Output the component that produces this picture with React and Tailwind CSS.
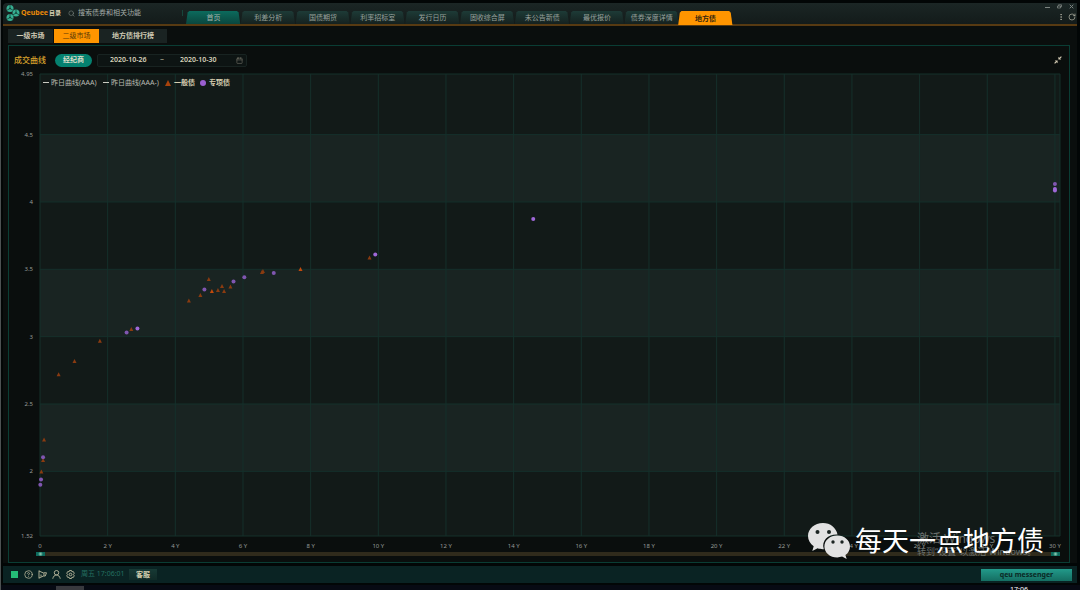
import React, { useState } from "react";
import { Calendar, CircleHelp, EllipsisVertical, RotateCw, Search } from "lucide-react";

const MAX_YEAR = 30.15;
const MIN_YIELD = 1.52;
const MAX_YIELD = 4.95;

const mainTabs = [
  "首页", "利差分析", "国债期货", "利率招标室", "发行日历",
  "固收综合屏", "未公告新债", "最优报价", "债券深度详情", "地方债",
];

const generalBonds = [
  [0.04, 1.999], [0.09, 2.084], [0.12, 2.237], [0.55, 2.72], [1.02, 2.82],
  [1.77, 2.97], [2.7, 3.057], [4.4, 3.268], [4.74, 3.309], [4.99, 3.428],
  [5.08, 3.339, true], [5.26, 3.346], [5.38, 3.376], [5.44, 3.339], [5.63, 3.372],
  [6.56, 3.48], [6.59, 3.487], [7.7, 3.502, true], [9.74, 3.588],
];

const specialBonds = [
  [0.01, 1.9], [0.03, 1.94], [0.09, 2.104], [2.56, 3.031], [2.88, 3.061, true],
  [4.86, 3.35], [5.72, 3.41], [6.04, 3.441], [6.91, 3.473], [9.91, 3.61, true],
  [14.58, 3.874, true], [30, 4.133], [30, 4.096, true], [30, 4.085, true],
];

const yTicks = [4.95, 4.5, 4, 3.5, 3, 2.5, 2, 1.52];
const xTicks = [0, 2, 4, 6, 8, 10, 12, 14, 16, 18, 20, 22, 24, 26, 28, 30];
const bands = [4.5, 3.5, 2.5];

const toX = (year) => `${(year / MAX_YEAR) * 100}%`;
const toY = (value) => `${((MAX_YIELD - value) / (MAX_YIELD - MIN_YIELD)) * 100}%`;

const Logo = () => (
  <svg viewBox="0 0 28 32" className="w-3.5 h-4 mr-px shrink-0" aria-hidden="true">
    {[[8, 7], [20, 16], [8, 25]].map(([cx, cy]) => (
      <g key={cy} transform={`translate(${cx} ${cy})`}>
        <circle r="7" fill="#36ae91" />
        <path d="M0 0V-7M0 0L6 3.500M0 0L-6 3.500" stroke="#10332d" strokeWidth="1.400" />
        <circle r="1.500" fill="#10332d" />
      </g>
    ))}
  </svg>
);

const Header = () => {
  const [active, setActive] = useState("地方债");

  return (
    <header className="flex h-[23px] border-b-2 border-[#573a12] bg-linear-to-b from-[#1b2625] to-[#131b1a] rounded-tl">
      <div className="flex items-center w-[183px] shrink-0 pl-[3px] pb-px">
        <Logo />
        <span className="w-7 text-[7px] font-bold text-[#e88909]">Qeubee</span>
        <button className="w-[19px] text-left text-[6px] font-bold text-[#d9d2b4]">目录</button>
        <label className="flex items-center gap-[3px]">
          <Search className="w-[7px] h-[7px] text-[#7c8682]" />
          <input
            aria-label="搜索"
            placeholder="搜索债券和相关功能"
            className="w-[104px] text-[7px] leading-[10px] bg-transparent outline-none text-[#a4aca8] placeholder:text-[#a4aca8]"
          />
        </label>
        <span className="w-px h-1.5 shrink-0 bg-[#17453b]" />
      </div>
      <nav className="flex items-end w-[546px] shrink-0">
        {mainTabs.map((tab) => (
          <button
            key={tab}
            onClick={() => setActive(tab)}
            className={`flex-1 h-[13px] pt-px text-[7px] leading-[12px] whitespace-nowrap [clip-path:polygon(0_100%,3%_12%,6%_0,93%_0,96%_12%,99%_100%)] ${
              tab === active
                ? "-mx-px -mb-px h-[14px] font-bold bg-[#ff9500] text-[#35270d]"
                : tab === "首页"
                ? "bg-linear-to-b from-[#0b6b5d] to-[#0a463e] text-[#a5b5ae]"
                : "bg-linear-to-b from-[#1d3b37] to-[#15211f] text-[#98a19d]"
            }`}
          >
            {tab}
          </button>
        ))}
      </nav>
      <div className="flex flex-col items-end justify-between ml-auto pr-px pt-px pb-[3px]">
        <div className="flex gap-[7px] text-[#7d8582]">
          <button aria-label="最小化">
            <svg viewBox="0 0 5 5" className="w-[5px] h-[5px]"><path d="M0 3.5h5" stroke="currentColor" /></svg>
          </button>
          <button aria-label="还原">
            <svg viewBox="0 0 5 5" className="w-[5px] h-[5px]">
              <path d="M.5 2h3v2h-3zM1.5 1.8V.8h3v2h-1" fill="none" stroke="currentColor" strokeWidth=".8" />
            </svg>
          </button>
          <button aria-label="关闭" className="mr-0.5">
            <svg viewBox="0 0 5 5" className="w-[5px] h-[5px]"><path d="M.7.7l3.6 3.6M4.3.7L.7 4.3" stroke="currentColor" /></svg>
          </button>
        </div>
        <div className="flex gap-[3px] text-[#b9b9aa]">
          <button aria-label="更多"><EllipsisVertical className="w-2 h-2" /></button>
          <button aria-label="刷新"><RotateCw className="w-2 h-2" /></button>
        </div>
      </div>
    </header>
  );
};

const SubTabs = () => (
  <nav className="flex h-[14px] mt-[3px] mb-0.5 ml-[5px] text-[7px] font-bold text-[#cfcab4]">
    <button className="w-[45px] mr-px bg-[#1a2322]">一级市场</button>
    <button className="w-[45px] font-normal bg-[#ff9500] text-[#5b3a08]">二级市场</button>
    <button className="w-[68px] bg-[#1a2322]">地方债排行榜</button>
  </nav>
);

const Toolbar = () => (
  <div className="flex items-center h-7 pl-[5px] pr-[7px]">
    <h1 className="w-[41px] text-[8px] font-medium text-[#d9a32c]">成交曲线</h1>
    <button className="w-[37px] h-[13px] rounded-full bg-[#058170] text-[7px] leading-[12px] font-bold text-[#dcdcc8]">
      经纪商
    </button>
    <div className="flex items-center h-[13px] w-[150px] ml-[5px] pl-3 pr-[3px] rounded-xs border border-[#182321] bg-[#0d1413] text-[7px] font-semibold text-[#d8d2bb]">
      <input aria-label="开始日期" defaultValue="2020-10-26" className="w-[50px] bg-transparent outline-none" />
      <span className="w-5">~</span>
      <input aria-label="结束日期" defaultValue="2020-10-30" className="w-12 bg-transparent outline-none" />
      <Calendar className="w-[7px] h-[7px] ml-auto text-[#77766b]" />
    </div>
    <button aria-label="退出全屏" className="ml-auto text-[#d9d0b8]">
      <svg viewBox="0 0 8 8" className="w-2 h-2">
        <path d="M4.4 3.6V.8l1 1L7 .2l.8.8-1.6 1.6 1 1zM3.6 4.4H.8l1 1L.2 7l.8.8 1.6-1.6 1 1z" fill="currentColor" />
      </svg>
    </button>
  </div>
);

const Legend = () => (
  <ul className="absolute left-[3px] top-[3px] flex items-center text-[7px] leading-[11px] text-[#b9bbb2]">
    <li className="flex items-center w-[60px] gap-0.5 whitespace-nowrap">
      <span className="w-1.5 h-px bg-[#c9cbc2]" />昨日曲线(AAA)
    </li>
    <li className="flex items-center w-[62px] gap-0.5 whitespace-nowrap">
      <span className="w-1.5 h-px bg-[#c9cbc2]" />昨日曲线(AAA-)
    </li>
    <li className="flex items-center w-[35px] gap-[3px] whitespace-nowrap font-semibold text-[#d6cdb0]">
      <svg viewBox="0 0 6 6" className="w-1.5 h-1.5"><path d="M3 0l3 6H0z" fill="#a8430c" /></svg>一般债
    </li>
    <li className="flex items-center gap-[3px] whitespace-nowrap font-semibold text-[#d6cdb0]">
      <span className="w-1.5 h-1.5 rounded-full bg-[#9a5fd0]" />专项债
    </li>
  </ul>
);

const CurveChart = () => (
  <div className="relative flex flex-1 min-h-60 ml-[31px] mr-[9px]">
    <svg className="w-full overflow-visible text-[6px]" role="img" aria-label="成交曲线">
      <rect width="100%" height="100%" fill="#121a18" />
      {bands.map((top) => (
        <rect key={top} y={toY(top)} width="100%" height={toY(MAX_YIELD - 0.5)} fill="#192422" />
      ))}
      <g stroke="#15302b">
        {yTicks.map((value) => (
          <line key={value} x1="0" x2="100%" y1={toY(value)} y2={toY(value)} />
        ))}
        {xTicks.map((year) => (
          <line key={year} x1={toX(year)} x2={toX(year)} y1="0" y2="100%" />
        ))}
        <line x1="100%" x2="100%" y1="0" y2="100%" />
      </g>
      <g fill="#969b98">
        {yTicks.map((value) => (
          <text key={value} x="-7" y={toY(value)} dy="2" textAnchor="end">{value}</text>
        ))}
        {xTicks.map((year) => (
          <text key={year} x={toX(year)} y="100%" dy="12" textAnchor="middle">
            {year === 0 ? "0" : `${year} Y`}
          </text>
        ))}
      </g>
      {generalBonds.map(([year, value, strong], i) => (
        <svg key={i} x={toX(year)} y={toY(value)} className="overflow-visible">
          <path d="M0 -2L2 2H-2Z" fill={strong ? "#c24a0c" : "#8a3b10"} />
        </svg>
      ))}
      {specialBonds.map(([year, value, strong], i) => (
        <circle key={i} cx={toX(year)} cy={toY(value)} r="2" fill={strong ? "#9f68d8" : "#8056b0"} />
      ))}
    </svg>
    <Legend />
  </div>
);

const thumb =
  "col-start-1 row-start-1 w-full h-1 appearance-none bg-transparent pointer-events-none [&::-webkit-slider-thumb]:appearance-none [&::-webkit-slider-thumb]:pointer-events-auto [&::-webkit-slider-thumb]:w-[9px] [&::-webkit-slider-thumb]:h-1 [&::-webkit-slider-thumb]:bg-[radial-gradient(circle,#9ed6bd_0,#0d6b5d_50%)]";

const RangeZoom = () => (
  <div className="grid h-1 mt-4 mb-1.5 ml-[27px] mr-[9px] bg-[#302b1c]">
    <input type="range" aria-label="起始期限" min="0" max="30" defaultValue="0" className={thumb} />
    <input type="range" aria-label="结束期限" min="0" max="30" defaultValue="30" className={thumb} />
  </div>
);

const StatusBar = () => (
  <footer className="flex items-center h-[17px] mt-[3px] pl-2 pr-[5px] bg-[#0a2323] text-[7px]">
    <span className="w-[7px] h-[7px] mr-1.5 bg-[#24bd78]" />
    <div className="flex gap-[5px] text-[#bdbb9f]">
      <button aria-label="帮助"><CircleHelp className="w-[9px] h-[9px]" /></button>
      <button aria-label="公告">
        <svg viewBox="0 0 18 18" className="w-[9px] h-[9px]" fill="none" stroke="currentColor" strokeWidth="1.8">
          <path d="M2 1v16M2 2l10 4.500v5L2 16M12 5.500h5L14.500 12H12M6 9v4" />
        </svg>
      </button>
      <button aria-label="用户">
        <svg viewBox="0 0 18 18" className="w-[9px] h-[9px]" fill="none" stroke="currentColor" strokeWidth="1.8">
          <circle cx="9" cy="5.500" r="4.500" />
          <path d="M1.500 17.500C2.500 13 5 10 9 10s6.500 3 7.500 7.500" />
        </svg>
      </button>
      <button aria-label="设置">
        <svg viewBox="0 0 18 18" className="w-[9px] h-[9px]" fill="none" stroke="currentColor" strokeWidth="1.8">
          <path d="M7 1h4l.8 2.6 2.7-.6 2 3.5L14.600 9l1.900 2.500-2 3.500-2.700-.6L11 17H7l-.8-2.600-2.700.6-2-3.500L3.400 9 1.500 6.500l2-3.500 2.700.6z" />
          <circle cx="9" cy="9" r="2.600" />
        </svg>
      </button>
    </div>
    <span className="w-12 ml-1.5 whitespace-nowrap text-[#246f60]">周五 17:06:01</span>
    <button className="w-7 h-[11px] leading-[10px] font-bold bg-linear-to-b from-[#173a35] to-[#102a27] text-[#d3cfaf]">
      客服
    </button>
    <button className="w-[91px] h-3 ml-auto leading-[12px] font-bold bg-linear-to-b from-[#229a8a] to-[#156e62] text-[#0a2824]">
      qeu messenger
    </button>
  </footer>
);

const Watermark = () => (
  <div className="absolute right-9 bottom-[31px] flex items-center pointer-events-none">
    <svg viewBox="0 0 42 36" className="w-[42px] h-9 mr-[5px]" aria-hidden="true">
      <path
        d="M15 0C6.500 0 0 5.800 0 13c0 4.300 2.300 7.900 5.700 10.300L4.300 28l5.300-2.700c2 .7 3.700 1 6.200.9C13 17 21 11 29.500 11.600 28.300 4.700 22.300 0 15 0z"
        fill="#e2e2e2"
      />
      <path
        d="M29.300 12.500c-7.300 0-12.900 4.800-12.900 10.900S22 34.400 29.300 34.400c1.700 0 3.300-.3 4.800-.8l4.600 2.400-1.300-4c2.900-2 4.600-5.100 4.600-8.600 0-6.100-5.600-10.900-12.700-10.900z"
        fill="#e2e2e2"
      />
      <g fill="#1b2422">
        <circle cx="9.500" cy="9" r="2" />
        <circle cx="21" cy="9" r="2" />
        <circle cx="25" cy="19" r="1.700" />
        <circle cx="34" cy="19" r="1.700" />
      </g>
    </svg>
    <div className="relative">
      <p className="absolute left-[62px] top-[9px] whitespace-nowrap text-[#6b706e]">
        <span className="block text-[12px] leading-[14px]">激活 Windows</span>
        <span className="block text-[9px] leading-[12px]">转到“设置”以激活 Windows。</span>
      </p>
      <p className="relative text-[27px] leading-[36px] whitespace-nowrap text-white">每天一点地方债</p>
    </div>
  </div>
);

const App = () => {
  return (
    <div className="relative flex flex-col min-h-screen bg-[#020606] border-l border-[#4c5152] font-['Noto_Sans','Noto_Sans_CJK_SC',sans-serif]">
      <div className="flex flex-col flex-1 mt-[3px] ml-0.5 mr-[3px]">
        <Header />
        <main className="flex flex-col flex-1 bg-[#0a0e0d]">
          <SubTabs />
          <section className="flex flex-col flex-1 ml-[5px] mr-[7px] border border-[#0a3d34]">
            <Toolbar />
            <CurveChart />
            <RangeZoom />
          </section>
        </main>
        <StatusBar />
      </div>
      <div className="flex justify-between h-[5px] mt-0.5 pl-[55px] pr-[52px] overflow-hidden bg-[#070a13]">
        <span className="w-7 mt-px bg-[#38393e]" />
        <time className="mt-px text-[7px] leading-[7px] text-white">17:06</time>
      </div>
      <Watermark />
    </div>
  );
};

export default App;
